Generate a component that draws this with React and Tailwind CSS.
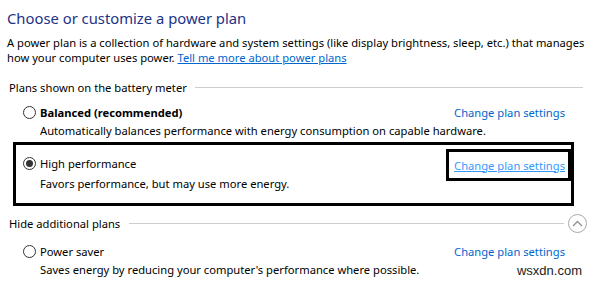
import React from "react";

const font = { fontFamily: '"Noto Sans", "Open Sans", sans-serif' };

function Radio({ checked }) {
  return (
    <span className="relative flex h-[13px] w-[13px] shrink-0 items-center justify-center rounded-full border border-[#333333] bg-white">
      {checked && <span className="h-[7px] w-[7px] rounded-full bg-[#333333]" />}
    </span>
  );
}

function PlanRow({ name, bold, desc, checked, link }) {
  return (
    <div className="flex flex-col">
      <div className="flex h-[18px] items-center">
        <Radio checked={checked} />
        <span className={"ml-[4px] " + (bold ? "font-bold" : "")}>{name}</span>
        <span className="ml-auto">{link}</span>
      </div>
      <div className="ml-[17px] flex h-[18px] items-center">{desc}</div>
    </div>
  );
}

const plainLink = (
  <span className="mr-[9px] whitespace-nowrap text-[#0066cc]">Change plan settings</span>
);

export default function App() {
  return (
    <div
      className="relative h-[282px] w-[594px] overflow-hidden bg-white text-[11.2px] leading-[15px] text-black"
      style={font}
    >
      <div className="flex flex-col">
        <div className="ml-[7px] mt-[7px] flex h-[22px] items-center text-[14.8px] text-[#1e3287]">
          Choose or customize a power plan
        </div>
        <div className="ml-[7px] mt-[6px] w-[587px] whitespace-nowrap">
          A power plan is a collection of hardware and system settings (like display brightness, sleep, etc.) that manages
          <br />
          how your computer uses power.{" "}
          <span className="text-[#0066cc] underline">Tell me more about power plans</span>
        </div>
        <div className="ml-[9px] mr-[11px] mt-[14px] flex h-[16px] items-center gap-[8px]">
          <span>Plans shown on the battery meter</span>
          <span className="h-px flex-1 bg-[#cdcdcd]" />
        </div>
        <div className="ml-[23px] mr-[20px] mt-[8px]">
          <PlanRow
            name="Balanced (recommended)"
            bold
            desc="Automatically balances performance with energy consumption on capable hardware."
            link={plainLink}
          />
        </div>
        <div className="ml-[13px] mr-[20px] mt-[3px] h-[64px] border-[3px] border-black pl-[7px] pt-[9px]">
          <div className="flex h-[18px] items-center">
            <Radio checked />
            <span className="ml-[4px]">High performance</span>
            <span className="ml-auto mt-[4px] flex h-[32px] w-[125px] items-center justify-end whitespace-nowrap border-[3px] border-black pr-[3px]">
              <span className="text-[#3399ff] underline">Change plan settings</span>
            </span>
          </div>
          <div className="ml-[17px] mt-[2px] flex h-[18px] items-center">
            Favors performance, but may use more energy.
          </div>
        </div>
        <div className="ml-[9px] mr-[7px] mt-[7px] flex h-[20px] items-center">
          <span>Hide additional plans</span>
          <span className="ml-[9px] h-px flex-1 bg-[#cdcdcd]" />
          <span className="ml-[4px] flex h-[19px] w-[19px] items-center justify-center rounded-full border border-[#a8a8a8]">
            <svg width="11" height="7" viewBox="0 0 11 7" fill="none">
              <path d="M1 6 L5.5 1.5 L10 6" stroke="#909090" strokeWidth="1.3" />
            </svg>
          </span>
        </div>
        <div className="ml-[23px] mr-[20px] mt-[9px]">
          <PlanRow
            name="Power saver"
            desc="Saves energy by reducing your computer's performance where possible."
            link={plainLink}
          />
        </div>
      </div>
      <div
        className="absolute bottom-[3px] right-[12px] text-[13px] leading-[16px] text-[#222]"
        style={{ fontFamily: '"Liberation Sans", Arial, sans-serif' }}
      >
        wsxdn.com
      </div>
    </div>
  );
}
